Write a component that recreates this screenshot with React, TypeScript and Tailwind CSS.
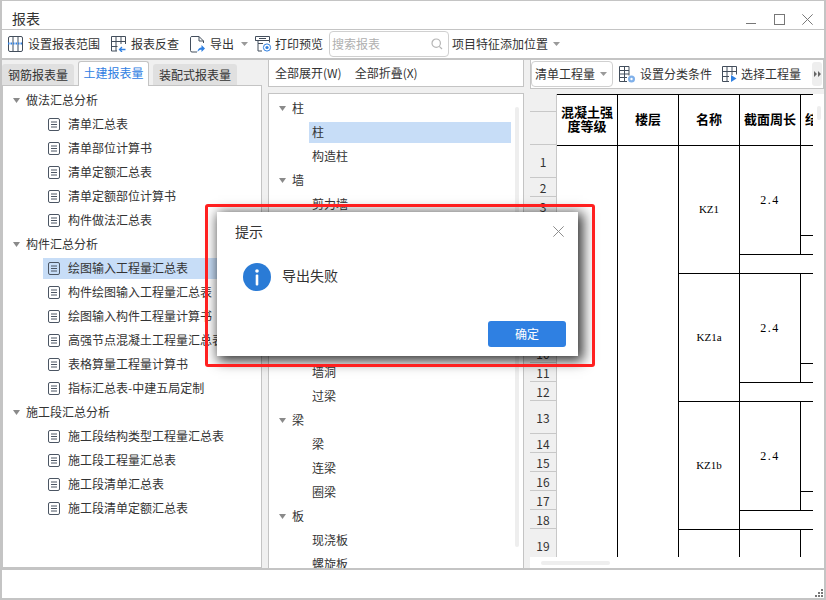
const leftTree = [
  {
    title: "做法汇总分析",
    items: ["清单汇总表", "清单部位计算书", "清单定额汇总表", "清单定额部位计算书", "构件做法汇总表"],
  },
  {
    title: "构件汇总分析",
    items: [
      "绘图输入工程量汇总表",
      "构件绘图输入工程量汇总表",
      "绘图输入构件工程量计算书",
      "高强节点混凝土工程量汇总表",
      "表格算量工程量计算书",
      "指标汇总表-中建五局定制",
    ],
  },
  {
    title: "施工段汇总分析",
    items: ["施工段结构类型工程量汇总表", "施工段工程量汇总表", "施工段清单汇总表", "施工段清单定额汇总表"],
  },
]

const gutterRows = [
  [1, 33], [2, 19], [3, 19], [4, 19], [5, 19], [6, 19],
  [7, 33], [8, 19], [9, 19], [10, 19], [11, 19], [12, 19],
  [13, 33], [14, 19], [15, 19], [16, 19], [17, 19], [18, 19],
  [19, 33],
]

const Caret = ({ className = "" }: { className?: string }) => (
  <svg width="7" height="4" viewBox="0 0 7 4" className={`shrink-0 ${className}`}>
    <path d="M0 0h7L3.5 4z" fill="#9a9a9a" />
  </svg>
)

const TreeArrow = () => (
  <svg width="7" height="5" viewBox="0 0 7 5" className="shrink-0">
    <path d="M0 0h7L3.5 5z" fill="#8a8a8a" />
  </svg>
)

const DocIcon = () => (
  <svg width="12" height="13" viewBox="0 0 12 13" fill="none" className="shrink-0">
    <rect x="0.5" y="0.5" width="11" height="12" rx="1.5" stroke="#4b5563" />
    <path d="M3 4h6M3 6.5h6M3 9h6" stroke="#4b5563" />
  </svg>
)

const RangeIcon = () => (
  <svg width="15" height="16" viewBox="0 0 15 16" fill="none" className="shrink-0">
    <rect x="0.5" y="0.5" width="14" height="15" rx="1.5" stroke="#434e5c" />
    <path d="M5 1v14M10 1v14" stroke="#434e5c" />
    <path d="M0 7.5h15" stroke="#2f80e2" strokeWidth="2" strokeDasharray="1.5 1" />
  </svg>
)

const ReverseIcon = () => (
  <svg width="15" height="16" viewBox="0 0 15 16" fill="none" className="shrink-0">
    <path d="M6 15H.5V.5h14V8M.5 5.5h14M.5 10.500h6M5 1v14M10 1v7" stroke="#434e5c" />
    <path d="M14.500 13.500H9M11 11l-2.500 2.500L11 16" stroke="#2f80e2" strokeWidth="1.300" />
  </svg>
)

const ExportIcon = () => (
  <svg width="15" height="17" viewBox="0 0 15 17" fill="none" className="shrink-0">
    <path d="M7 16H2a1.500 1.500 0 0 1-1.500-1.500v-13A1.500 1.500 0 0 1 2 .5h7l4.500 4.500v2" stroke="#434e5c" />
    <path d="M9 .5V5h4.500" stroke="#434e5c" />
    <path d="M7.500 16c0-3 2-4.500 4-4.500V9l3.500 3.500-3.500 3.500v-2.300c-1.500 0-3 .6-4 2.300z" fill="#2f80e2" />
  </svg>
)

const PrintIcon = () => (
  <svg width="17" height="16" viewBox="0 0 17 16" fill="none" className="shrink-0">
    <path d="M3 4.500H.5V.5h14v4M4 2.500h7" stroke="#434e5c" />
    <path d="M.5 4.500h14v2M3 4.500v3h5M3 7.500v7.500h4" stroke="#434e5c" />
    <circle cx="12" cy="11.500" r="3.600" stroke="#2f80e2" />
    <circle cx="12" cy="11.500" r="1.600" fill="#2f80e2" />
  </svg>
)

const ClassifyIcon = () => (
  <svg width="16" height="17" viewBox="0 0 16 17" fill="none" className="shrink-0">
    <path d="M8 15.500H.5V.5H10v9M.5 4.500h9.500M.5 8h9.500M.5 11.500H8M5.500 1v14" stroke="#434e5c" />
    <circle cx="12.500" cy="13" r="3.500" fill="#7fb0ea" />
    <circle cx="12.500" cy="13" r="1.200" fill="#ffffff" />
  </svg>
)

const SelectIcon = () => (
  <svg width="15" height="16" viewBox="0 0 15 16" fill="none" className="shrink-0">
    <path d="M7 15.500H.5V.5h14v8M.5 5.500h14M.5 10.500H7M5 1v14M10 1v8" stroke="#434e5c" />
    <path d="M9 9l5.500 3.500L9 16z" fill="#2f80e2" />
  </svg>
)

const SearchIcon = () => (
  <svg width="12" height="12" viewBox="0 0 12 12" fill="none">
    <circle cx="5.200" cy="5.200" r="4.200" stroke="#b5b5b5" strokeWidth="1.200" />
    <path d="M8.300 8.300 11 11" stroke="#b5b5b5" strokeWidth="1.200" />
  </svg>
)

const CloseIcon = ({ size, color }: { size: number; color: string }) => (
  <svg width={size} height={size} viewBox="0 0 10 10" fill="none">
    <path d="M.3.3l9.400 9.400M9.700.3.3 9.700" stroke={color} strokeWidth="0.900" />
  </svg>
)

const InfoIcon = () => (
  <svg width="28" height="28" viewBox="0 0 28 28" className="shrink-0">
    <circle cx="14" cy="14" r="14" fill="#2a7bd6" />
    <circle cx="14" cy="8" r="1.800" fill="#ffffff" />
    <rect x="12.700" y="11.500" width="2.600" height="11" rx="1" fill="#ffffff" />
  </svg>
)

const TitleBar = () => (
  <div className="flex h-[29px] shrink-0 items-end border-b border-[#c4c4c4] bg-white pb-[1px] pl-[10px] pr-[11px]">
    <span className="text-[14px] leading-[20px]">报表</span>
    <div className="ml-auto flex items-center pb-[3px]">
      <div className="mt-[8px] h-px w-[10px] bg-[#777]" />
      <div className="ml-[18px] h-[11px] w-[11px] border border-[#777]" />
      <div className="ml-[17px]">
        <CloseIcon size={11} color="#777" />
      </div>
    </div>
  </div>
)

const Toolbar = () => (
  <div className="flex h-[30px] shrink-0 items-center border-b-2 border-[#c4c4c4] bg-white pl-[6px] text-[12px]">
    <RangeIcon />
    <span className="ml-[5px]">设置报表范围</span>
    <div className="ml-[11px]">
      <ReverseIcon />
    </div>
    <span className="ml-[5px]">报表反查</span>
    <div className="ml-[11px]">
      <ExportIcon />
    </div>
    <span className="ml-[5px]">导出</span>
    <Caret className="ml-[7px]" />
    <div className="ml-[7px]">
      <PrintIcon />
    </div>
    <span className="ml-[3px]">打印预览</span>
    <div className="ml-[6px] flex h-[26px] w-[120px] items-center justify-between rounded-[4px] border border-[#d0d0d0] pl-[2px] pr-[5px] text-[#b0b0b0]">
      <span>搜索报表</span>
      <SearchIcon />
    </div>
    <span className="ml-[3px]">项目特征添加位置</span>
    <Caret className="ml-[5px]" />
  </div>
)

const LeftPanel = () => (
  <div className="flex w-[260px] shrink-0 flex-col">
    <div className="flex h-[25px] shrink-0 items-end text-[12px]">
      <div className="flex h-[21px] w-[72px] items-center justify-center rounded-t-[3px] bg-[#e0e0e0]">钢筋报表量</div>
      <div className="relative top-px z-10 ml-[4px] flex h-[25px] w-[71px] items-center justify-center rounded-t-[3px] border-x border-t border-[#c4c4c4] bg-white pb-[2px] text-[#2f80e2]">
        土建报表量
      </div>
      <div className="ml-[4px] flex h-[21px] w-[84px] items-center justify-center rounded-t-[3px] bg-[#e0e0e0]">
        装配式报表量
      </div>
    </div>
    <div className="flex-1 overflow-hidden border border-[#c4c4c4] bg-white pt-[2px] text-[12px]">
      {leftTree.map((group) => (
        <div key={group.title}>
          <div className="flex h-6 items-center pl-[10px]">
            <TreeArrow />
            <span className="ml-[6px]">{group.title}</span>
          </div>
          {group.items.map((item, i) => (
            <div key={item} className="flex h-6 items-center pl-[40px]">
              <div
                className={`flex h-[21px] flex-1 items-center pl-[5px] ${
                  group.title === "构件汇总分析" && i === 0 ? "bg-[#c7ddf7]" : ""
                }`}
              >
                <DocIcon />
                <span className="ml-[8px] whitespace-nowrap">{item}</span>
              </div>
            </div>
          ))}
        </div>
      ))}
    </div>
  </div>
)

const midGroups = [
  { title: "柱", items: ["柱", "构造柱"] },
  { title: "墙", items: ["剪力墙"] },
]

const MidRow = ({ text, active }: { text: string; active?: boolean }) => (
  <div className="flex h-6 items-center pl-[40px] pr-[4px]">
    <div className={`flex h-[21px] flex-1 items-center pl-[3px] ${active ? "bg-[#c7ddf7]" : ""}`}>{text}</div>
  </div>
)

const MidGroup = ({ text }: { text: string }) => (
  <div className="flex h-6 items-center pl-[10px]">
    <TreeArrow />
    <span className="ml-[6px]">{text}</span>
  </div>
)

const MiddlePanel = () => (
  <div className="flex w-[256px] shrink-0 flex-col text-[12px]">
    <div className="flex h-[27px] shrink-0 items-center gap-[13px] border-x border-b border-[#c4c4c4] bg-white pl-[6px]">
      <span>全部展开(W)</span>
      <span>全部折叠(X)</span>
    </div>
    <div className="mt-[6px] flex flex-1 overflow-hidden border-x border-t border-[#c4c4c4] bg-white">
      <div className="flex-1 pt-[2px]">
        {midGroups.map((g) => (
          <div key={g.title}>
            <MidGroup text={g.title} />
            {g.items.map((t, i) => (
              <MidRow key={t} text={t} active={g.title === "柱" && i === 0} />
            ))}
          </div>
        ))}
        <div className="h-[144px]" />
        <MidRow text="墙洞" />
        <MidRow text="过梁" />
        <MidGroup text="梁" />
        <MidRow text="梁" />
        <MidRow text="连梁" />
        <MidRow text="圈梁" />
        <MidGroup text="板" />
        <MidRow text="现浇板" />
        <MidRow text="螺旋板" />
      </div>
      <div className="mr-[4px] mt-[13px] h-[440px] w-[4px] shrink-0 rounded-[2px] bg-[#eeeeee]" />
    </div>
  </div>
)

const RightToolbar = () => (
  <div className="flex h-[29px] shrink-0 items-center border-x border-b border-[#c4c4c4] bg-white text-[12px]">
    <div className="flex h-[26px] w-[82px] items-center rounded-[4px] border border-[#d0d0d0] pl-[3px]">
      <span>清单工程量</span>
      <Caret className="ml-[5px]" />
    </div>
    <div className="ml-[6px]">
      <ClassifyIcon />
    </div>
    <span className="ml-[5px]">设置分类条件</span>
    <div className="ml-[10px]">
      <SelectIcon />
    </div>
    <span className="ml-[4px]">选择工程量</span>
    <div className="ml-[11px] flex h-[24px] w-[10px] items-center justify-center rounded-[3px] bg-[#eeeeee]">
      <svg width="7" height="6" viewBox="0 0 7 6">
        <path d="M0 0l3 3-3 3zM4 0l3 3-3 3z" fill="#666" />
      </svg>
    </div>
  </div>
)

const Gutter = () => (
  <div className="w-[27px] shrink-0 border-r border-[#c8c8c8] bg-[#f0f0f0] text-center text-[12px]">
    <div className="h-[18px] border-b border-[#c8c8c8]" />
    <div className="h-[33px] border-b border-[#c8c8c8]" />
    {gutterRows.map(([n, h]) => (
      <div
        key={n}
        className={`flex items-center justify-center border-b border-[#c8c8c8] pt-[1px] ${h === 33 ? "h-[33px]" : "h-[19px]"}`}
      >
        {n}
      </div>
    ))}
  </div>
)

const HeadCell = ({ lines }: { lines: string[] }) => (
  <div className="flex h-full w-[61px] shrink-0 flex-col items-center justify-center border-r border-black pb-[3px]">
    {lines.map((l) => (
      <div key={l} className="whitespace-nowrap text-[13px] font-bold leading-[14px] text-black">
        {l}
      </div>
    ))}
  </div>
)

const Block = ({ name }: { name: string }) => (
  <div className="flex h-[128px] border-b border-black">
    <div className="flex w-[61px] shrink-0 items-center justify-center border-r border-black text-[11px]">{name}</div>
    <div className="flex flex-1 flex-col">
      <div className="flex h-[109px] border-b border-black">
        <div className="flex w-[61px] shrink-0 items-center justify-center border-r border-black text-[12px] tracking-[1.5px]">
          2.4
        </div>
        <div className="flex-1">
          <div className="h-[90px] border-b border-black" />
        </div>
      </div>
    </div>
  </div>
)

const Sheet = () => (
  <div className="w-[256px] shrink-0 overflow-hidden">
    <div className="w-[320px]">
      <div className="flex h-[52px] border-y border-black">
        <HeadCell lines={["混凝土强", "度等级"]} />
        <HeadCell lines={["楼层"]} />
        <HeadCell lines={["名称"]} />
        <HeadCell lines={["截面周长"]} />
        <HeadCell lines={["结构类型"]} />
      </div>
      <div className="flex h-[420px]">
        <div className="w-[61px] shrink-0 border-r border-black" />
        <div className="w-[61px] shrink-0 border-r border-black" />
        <div className="flex-1 font-['Liberation_Serif',serif] text-black">
          <Block name="KZ1" />
          <Block name="KZ1a" />
          <Block name="KZ1b" />
          <div className="flex h-[40px]">
            <div className="w-[61px] border-r border-black" />
            <div className="w-[61px] border-r border-black" />
          </div>
        </div>
      </div>
    </div>
  </div>
)

const RightPanel = () => (
  <div className="flex min-w-0 flex-1 flex-col">
    <RightToolbar />
    <div className="mt-[5px] flex flex-1 flex-col overflow-hidden bg-white">
      <div className="flex h-[463px] shrink-0 overflow-hidden">
        <Gutter />
        <Sheet />
        <div className="ml-[4px] mt-[12px] h-[14px] w-[4px] rounded-[2px] bg-[#eeeeee]" />
      </div>
      <div className="ml-[11px] mt-[4px] h-[4px] w-[69px] rounded-[2px] bg-[#eeeeee]" />
    </div>
  </div>
)

const StatusBar = () => (
  <div className="flex h-[30px] shrink-0 items-end justify-end border-t-2 border-[#c4c4c4] bg-white pb-[1px] pr-[1px]">
    <svg width="8" height="8" viewBox="0 0 8 8">
      <path d="M6 0h2v2H6zM3 3h2v2H3zM6 3h2v2H6zM0 6h2v2H0zM3 6h2v2H3zM6 6h2v2H6z" fill="#777" />
    </svg>
  </div>
)

const Dialog = () => (
  <div className="absolute left-[217px] top-[212px] flex h-[144px] w-[361px] flex-col bg-white shadow-[3px_3px_12px_2px_rgba(0,0,0,0.8)]">
    <div className="flex h-[38px] items-center justify-between pl-[18px] pr-[14px] text-[14px]">
      <span>提示</span>
      <CloseIcon size={11} color="#8c8c8c" />
    </div>
    <div className="mt-[13px] flex items-center pl-[26px] text-[14px]">
      <InfoIcon />
      <span className="ml-[11px] pb-[3px]">导出失败</span>
    </div>
    <div className="mb-[9px] mr-[12px] mt-auto flex justify-end">
      <button className="h-[26px] w-[78px] rounded-[3px] bg-[#2f80e2] text-[12px] text-white">确定</button>
    </div>
  </div>
)

export default function App() {
  return (
    <div className="relative h-[600px] w-[826px] overflow-hidden bg-white font-['Noto_Sans_CJK_SC',sans-serif] text-[#333]">
      <div className="flex h-full flex-col border-x-2 border-b-2 border-t border-[#c4c4c4]">
        <TitleBar />
        <Toolbar />
        <div className="flex min-h-0 flex-1 bg-[#f0f0f0]">
          <LeftPanel />
          <div className="w-[6px] shrink-0" />
          <MiddlePanel />
          <div className="w-[6px] shrink-0" />
          <RightPanel />
        </div>
        <StatusBar />
      </div>
      <Dialog />
      <div className="pointer-events-none absolute left-[205px] top-[204px] h-[163px] w-[390px] rounded-[3px] border-[3px] border-[#ff2020]" />
    </div>
  )
}
